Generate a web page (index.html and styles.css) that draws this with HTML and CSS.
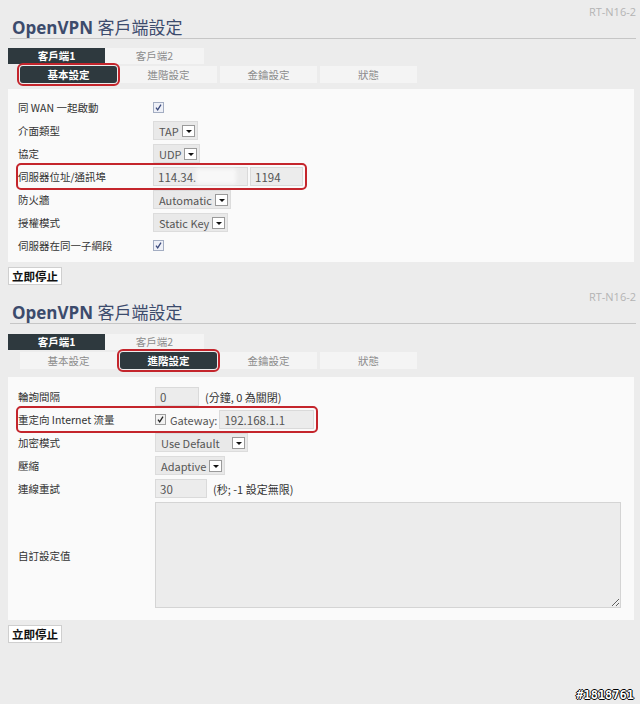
FILE: index.html
```html
<!DOCTYPE html>
<html lang="zh-Hant">
<head>
    <meta charset="UTF-8">
    <meta name="viewport" content="width=device-width, initial-scale=1.0">
    <title>OpenVPN 客戶端設定</title>
    <link rel="stylesheet" href="styles.css">
</head>
<body>
    <!-- Basic settings -->
    <section class="page">
        <div class="model">RT-N16-2</div>
        <h1 class="title"><b>OpenVPN</b> 客戶端設定</h1>

        <div class="tabs">
            <div class="tab active">客戶端1</div>
            <div class="tab">客戶端2</div>
        </div>
        <div class="subtabs">
            <div class="subtab active marked">基本設定</div>
            <div class="subtab">進階設定</div>
            <div class="subtab">金鑰設定</div>
            <div class="subtab">狀態</div>
        </div>

        <div class="panel">
            <div class="row">
                <span class="label">同 WAN 一起啟動</span>
                <span class="check"><svg width="11" height="11" viewBox="0 0 11 11"><rect x="0.5" y="0.5" width="10" height="10" fill="#eef0f7" stroke="#a3adc2"/><path d="M3 5.6 L4.7 7.9 L8 2.7" fill="none" stroke="#3b4a7c" stroke-width="1.3"/></svg></span>
            </div>
            <div class="row">
                <span class="label">介面類型</span>
                <span class="select">TAP<span class="caret"></span></span>
            </div>
            <div class="row">
                <span class="label">協定</span>
                <span class="select">UDP<span class="caret"></span></span>
            </div>
            <div class="row marked">
                <span class="label">伺服器位址/通訊埠</span>
                <span class="field w95">114.34.<span class="blur"></span></span>
                <span class="field w53">1194</span>
            </div>
            <div class="row">
                <span class="label">防火牆</span>
                <span class="select">Automatic<span class="caret"></span></span>
            </div>
            <div class="row">
                <span class="label">授權模式</span>
                <span class="select">Static Key<span class="caret"></span></span>
            </div>
            <div class="row">
                <span class="label">伺服器在同一子網段</span>
                <span class="check"><svg width="11" height="11" viewBox="0 0 11 11"><rect x="0.5" y="0.5" width="10" height="10" fill="#eef0f7" stroke="#a3adc2"/><path d="M3 5.6 L4.7 7.9 L8 2.7" fill="none" stroke="#3b4a7c" stroke-width="1.3"/></svg></span>
            </div>
        </div>

        <button class="stop">立即停止</button>
    </section>

    <!-- Advanced settings -->
    <section class="page adv">
        <div class="model">RT-N16-2</div>
        <h1 class="title"><b>OpenVPN</b> 客戶端設定</h1>

        <div class="tabs">
            <div class="tab active">客戶端1</div>
            <div class="tab">客戶端2</div>
        </div>
        <div class="subtabs">
            <div class="subtab">基本設定</div>
            <div class="subtab active marked">進階設定</div>
            <div class="subtab">金鑰設定</div>
            <div class="subtab">狀態</div>
        </div>

        <div class="panel">
            <div class="row">
                <span class="label">輪詢間隔</span>
                <span class="field w44">0</span>
                <span class="note">(分鐘, 0 為關閉)</span>
            </div>
            <div class="row marked">
                <span class="label">重定向 Internet 流量</span>
                <span class="check"><svg width="11" height="11" viewBox="0 0 11 11"><rect x="0.5" y="0.5" width="10" height="10" fill="#f2f2f2" stroke="#a0a0a0"/><path d="M3 5.6 L4.7 7.9 L8 2.7" fill="none" stroke="#222" stroke-width="1.3"/></svg></span>
                <span class="gw">Gateway:</span>
                <span class="field w95">192.168.1.1</span>
            </div>
            <div class="row">
                <span class="label">加密模式</span>
                <span class="select wide">Use Default<span class="caret"></span></span>
            </div>
            <div class="row">
                <span class="label">壓縮</span>
                <span class="select">Adaptive<span class="caret"></span></span>
            </div>
            <div class="row">
                <span class="label">連線重試</span>
                <span class="field w52">30</span>
                <span class="note">(秒; -1 設定無限)</span>
            </div>
            <div class="row tall">
                <span class="label">自訂設定值</span>
                <textarea class="custom" readonly></textarea>
            </div>
        </div>

        <button class="stop">立即停止</button>
    </section>

    <div class="stamp">#1818761</div>
</body>
</html>
```

FILE: styles.css
```css
body {
    margin: 0;
    min-height: 704px;
    position: relative;
    background-color: #ececec;
    font-family: "Noto Sans CJK TC", sans-serif;
    font-size: 11px;
    color: #333;
}

.page {
    padding-top: 6px;
}

.model {
    height: 12px;
    line-height: 12px;
    padding-right: 4px;
    text-align: right;
    font-family: "Open Sans", sans-serif;
    font-size: 11px;
    color: #b4b4b4;
}

.title {
    margin: 0 4px 0 10px;
    padding-left: 2px;
    height: 20px;
    line-height: 20px;
    border-bottom: 1px solid #c6c6c6;
    font-family: "Open Sans", "Noto Sans CJK TC", sans-serif;
    font-size: 17px;
    font-weight: normal;
    color: #3c4b6c;
}

.title b {
    font-weight: 700;
}

/* Tabs */
.tabs {
    display: flex;
    margin: 9px 0 0 8px;
}

.tab {
    width: 97px;
    height: 16px;
    line-height: 16px;
    text-align: center;
    font-size: 10.5px;
    background-color: #f4f4f4;
    color: #8c8c8c;
}

.tab + .tab {
    width: 99px;
}

.subtabs {
    display: flex;
    gap: 3px;
    margin: 2px 0 0 20px;
}

.subtab {
    width: 97px;
    height: 17px;
    line-height: 17px;
    text-align: center;
    font-size: 10.5px;
    background-color: #f4f4f4;
    color: #8c8c8c;
}

.tab.active,
.subtab.active {
    background-color: #2e393e;
    color: #fff;
    font-weight: bold;
}

/* Red highlight boxes */
.marked {
    outline: 2px solid #c4252c;
    outline-offset: 1px;
    border-radius: 3px;
}

/* Settings panel */
.panel {
    margin: 6px 6px 0 8px;
    padding: 7px 13px 5px 10px;
    background-color: #fafafa;
}

.row {
    display: flex;
    align-items: center;
    height: 23px;
}

.row.marked {
    width: fit-content;
    padding-right: 2px;
    outline-offset: 0;
}

.label {
    flex: none;
    width: 135px;
    font-size: 10.5px;
    color: #333;
}

.check {
    display: inline-flex;
}

.select {
    display: inline-flex;
    align-items: center;
    gap: 3px;
    height: 19px;
    box-sizing: border-box;
    padding: 0 2px 0 5px;
    background-color: #e9e9e9;
    border: 1px solid #dcdcdc;
    font-size: 11px;
    color: #555;
}

.select.wide {
    width: 93px;
    justify-content: space-between;
}

.caret {
    position: relative;
    width: 13px;
    height: 12px;
    box-sizing: border-box;
    background-color: #fff;
    border: 1px solid #9a9a9a;
}

.caret::after {
    content: "";
    position: absolute;
    left: 3px;
    top: 4px;
    border-left: 3px solid transparent;
    border-right: 3px solid transparent;
    border-top: 3px solid #111;
}

.field {
    display: inline-flex;
    align-items: center;
    height: 19px;
    box-sizing: border-box;
    padding: 0 4px;
    background-color: #ececec;
    border: 1px solid #dadada;
    font-size: 11.5px;
    color: #555;
}

.field + .field {
    margin-left: 2px;
}

.w44 { width: 44px; }
.w52 { width: 52px; }
.w53 { width: 53px; }
.w95 { width: 95px; }

.blur {
    display: inline-block;
    width: 40px;
    height: 15px;
    background-color: #f8f8f8;
    filter: blur(2px);
}

.note {
    margin-left: 6px;
    font-size: 11px;
    color: #333;
}

.gw {
    margin: 0 2px 0 4px;
    font-size: 11px;
    color: #555;
}

.row.tall {
    height: auto;
}

.custom {
    flex: 1;
    height: 106px;
    margin: 2px 0;
    box-sizing: border-box;
    background-color: #ececec;
    border: 1px solid #d4d4d4;
    resize: both;
}

.stop {
    display: block;
    margin: 5px 0 0 8px;
    height: 18px;
    padding: 0 3px;
    background-color: #fff;
    border: 1px solid #cfcfcf;
    font-family: "Noto Sans CJK TC", sans-serif;
    font-size: 11.5px;
    font-weight: bold;
    line-height: 16px;
    color: #111;
}

/* Advanced section offsets */
.adv .tabs {
    margin-top: 10px;
}

.adv .panel {
    margin-top: 8px;
    padding: 8px 13px 10px 10px;
}

.adv .label {
    width: 137px;
}

.stamp {
    position: absolute;
    right: 6px;
    bottom: 2px;
    font-family: "DejaVu Sans Mono", monospace;
    font-size: 12px;
    font-weight: bold;
    color: #fff;
    text-shadow: 1px 0 0 #000, -1px 0 0 #000, 0 1px 0 #000, 0 -1px 0 #000;
}
```
